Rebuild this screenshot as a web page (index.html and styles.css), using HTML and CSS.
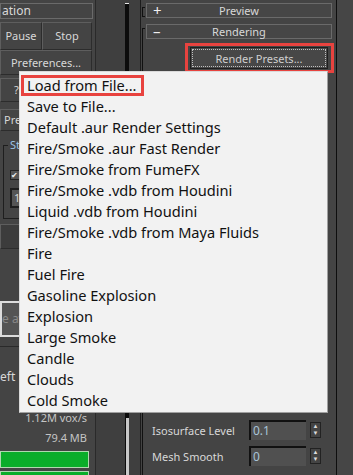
FILE: index.html
```html
<!DOCTYPE html>
<html lang="en">
<head>
    <meta charset="UTF-8">
    <title>Render Presets</title>
    <link rel="stylesheet" href="styles.css">
</head>
<body>
    <div class="screen">
        <div class="left">
            <div class="rollhead">ation</div>
            <div class="btnrow">
                <div class="btn pause">Pause</div>
                <div class="btn stop">Stop</div>
            </div>
            <div class="btn pref">Preferences...</div>
            <div class="btn help">?</div>
            <div class="btn pres">Pres</div>
            <div class="group">
                <span class="glabel">St</span>
                <div class="check">&#10004;</div>
                <div class="spin">1</div>
            </div>
            <div class="btn dark"></div>
            <div class="field">e av</div>
            <div class="sep"></div>
            <div class="lbl">eft</div>
            <div class="stat first">1.12M vox/s</div>
            <div class="stat">79.4 MB</div>
            <div class="bar"></div>
            <div class="bar"></div>
        </div>

        <div class="gutter">
            <div class="track"><div class="thumb"></div></div>
        </div>

        <div class="right">
            <div class="roll">
                <div class="head"><span class="sign">+</span>Preview</div>
            </div>
            <div class="roll open">
                <div class="head"><span class="sign">&ndash;</span>Rendering</div>
                <div class="presets-row">
                    <div class="highlight">
                        <div class="rbtn"><span class="focus">Render Presets...</span></div>
                    </div>
                </div>
                <div class="params">
                    <div class="param">
                        <span class="plabel">Isosurface Level</span>
                        <div class="pinput">0.1</div>
                        <div class="arrows">&#9650;<br>&#9660;</div>
                    </div>
                    <div class="param">
                        <span class="plabel">Mesh Smooth</span>
                        <div class="pinput">0</div>
                        <div class="arrows">&#9650;<br>&#9660;</div>
                    </div>
                </div>
            </div>
        </div>

        <div class="edge"></div>

        <ul class="menu">
            <li class="marked">Load from File...</li>
            <li>Save to File...</li>
            <li>Default .aur Render Settings</li>
            <li>Fire/Smoke .aur Fast Render</li>
            <li>Fire/Smoke from FumeFX</li>
            <li>Fire/Smoke .vdb from Houdini</li>
            <li>Liquid .vdb from Houdini</li>
            <li>Fire/Smoke .vdb from Maya Fluids</li>
            <li>Fire</li>
            <li>Fuel Fire</li>
            <li>Gasoline Explosion</li>
            <li>Explosion</li>
            <li>Large Smoke</li>
            <li>Candle</li>
            <li>Clouds</li>
            <li>Cold Smoke</li>
        </ul>
    </div>
</body>
</html>
```

FILE: styles.css
```css
* {
    margin: 0;
    padding: 0;
    box-sizing: border-box;
}
body {
    background: #444444;
    font-family: "Noto Sans", sans-serif;
    font-size: 11px;
    color: #d8d8d8;
}
.screen {
    position: relative;
    display: flex;
    width: 353px;
    height: 475px;
    overflow: hidden;
    background: #444444;
}

/* left panel */
.left {
    width: 96px;
    padding-top: 3px;
    border-right: 1px solid #2a2a2a;
    display: flex;
    flex-direction: column;
}
.left > div {
    flex-shrink: 0;
}
.rollhead {
    width: 93px;
    height: 16px;
    border: 1px solid #6a6a6a;
    line-height: 14px;
    padding-left: 1px;
    font-size: 12px;
}
.btnrow {
    display: flex;
    margin-top: 3px;
}
.btn {
    border: 1px solid #2c2c2c;
    border-top-color: #5e5e5e;
    border-left-color: #5e5e5e;
    text-align: center;
}
.pause {
    width: 42px;
    height: 28px;
    line-height: 26px;
}
.stop {
    width: 50px;
    height: 28px;
    line-height: 26px;
}
.pref {
    width: 92px;
    height: 25px;
    line-height: 23px;
}
.help {
    width: 92px;
    height: 24px;
    line-height: 22px;
    margin-top: 3px;
    text-align: left;
    padding-left: 13px;
}
.pres {
    width: 92px;
    height: 22px;
    line-height: 20px;
    margin-top: 7px;
    text-align: left;
    padding-left: 3px;
}
.group {
    position: relative;
    margin: 14px 0 0 3px;
    height: 74px;
    border: 1px solid #1e1e1e;
    padding: 24px 0 0 6px;
}
.glabel {
    position: absolute;
    top: -9px;
    left: 4px;
    background: #444444;
    padding: 0 2px;
    color: #9cc2e4;
}
.check {
    width: 10px;
    height: 10px;
    background: #555;
    border: 1px solid #222;
    font-size: 8px;
    line-height: 8px;
    color: #eee;
}
.spin {
    margin-top: 8px;
    width: 40px;
    height: 20px;
    border: 2px solid #1e1e1e;
    background: #555;
    padding-left: 2px;
    line-height: 16px;
}
.dark {
    margin-top: 5px;
    height: 25px;
    width: 92px;
    background: #3c3c3c;
}
.field {
    margin-top: 52px;
    height: 36px;
    width: 92px;
    border: 2px solid #dcdcdc;
    background: #545454;
    color: #8a8a8a;
    line-height: 32px;
    font-size: 12px;
}
.sep {
    margin-top: 9px;
    border-top: 1px solid #2a2a2a;
}
.lbl {
    margin-top: 22px;
    line-height: 16px;
    font-size: 12px;
}
.stat {
    text-align: right;
    padding-right: 8px;
    line-height: 20px;
    color: #c4c4c4;
}
.stat.first {
    margin-top: 23px;
}
.bar {
    width: 89px;
    height: 17px;
    background: #0aad2a;
    border: 1px solid #b0d8b0;
    margin-top: 3px;
}

/* middle scroll track */
.gutter {
    width: 45px;
    background: #3f3f3f;
    padding: 3px 11px 0 29px;
    border-right: 1px solid #1c1c1c;
}
.track {
    height: 100%;
    background: #0c0c0c;
    border-top: 1px solid #e8e8e8;
    position: relative;
}
.thumb {
    position: absolute;
    left: 1px;
    right: 0;
    bottom: 0;
    height: 57px;
    background: #c8c8c8;
}

/* right panel */
.right {
    width: 193px;
    padding: 3px 0 0 5px;
    display: flex;
    flex-direction: column;
    gap: 6px;
}
.roll {
    position: relative;
}
.roll::before {
    content: "";
    position: absolute;
    left: -4px;
    top: 4px;
    width: 2px;
    height: 8px;
    border: 1px solid #111;
    border-right: none;
}
.roll.open::before {
    height: 460px;
}
.head {
    position: relative;
    width: 186px;
    height: 15px;
    border: 1px solid #6a6a6a;
    text-align: center;
    line-height: 13px;
    background: #464646;
}
.sign {
    position: absolute;
    left: 6px;
    top: 0;
    font-size: 15px;
    color: #f0f0f0;
}
.presets-row {
    display: flex;
    justify-content: flex-end;
    margin-top: 4px;
}
.highlight {
    width: 149px;
    height: 30px;
    border: 3px solid #e8433f;
    padding: 1px 3px 1px 2px;
}
.rbtn {
    height: 100%;
    background: #474747;
    border: 1px solid #1e1e1e;
    padding: 1px;
}
.focus {
    display: block;
    height: 100%;
    border: 1px dotted #c0c0c0;
    text-align: center;
    line-height: 18px;
    color: #cfcfcf;
}
.params {
    margin-top: 344px;
    padding-left: 6px;
}
.param {
    display: flex;
    align-items: center;
    height: 26px;
}
.plabel {
    width: 97px;
}
.pinput {
    width: 57px;
    height: 20px;
    background: #505050;
    border-top: 2px solid #111;
    border-left: 2px solid #111;
    padding-left: 2px;
    line-height: 18px;
    color: #a8c4d8;
    font-size: 12px;
}
.arrows {
    margin-left: 4px;
    width: 11px;
    height: 16px;
    border: 1px solid #222;
    font-size: 6px;
    line-height: 7px;
    text-align: center;
    color: #ddd;
}

.edge {
    flex: 1;
    border-left: 1px solid #0e0e0e;
    margin-left: 2px;
    background: #464646;
}

/* popup menu */
.menu {
    position: absolute;
    left: 19px;
    top: 71px;
    width: 309px;
    height: 342px;
    list-style: none;
    background: #f2f2f2;
    border: 1px solid #dadada;
    border-right-color: #a0a0a0;
    border-bottom-color: #a0a0a0;
    padding-top: 3px;
    font-family: "Noto Sans", sans-serif;
    font-size: 14.6px;
    color: #111;
}
.menu li {
    height: 21px;
    line-height: 21px;
    padding-left: 7px;
}
.menu li.marked {
    width: 123px;
    margin-left: 1px;
    padding-left: 3px;
    border: 3px solid #e8433f;
    line-height: 15px;
}
```
